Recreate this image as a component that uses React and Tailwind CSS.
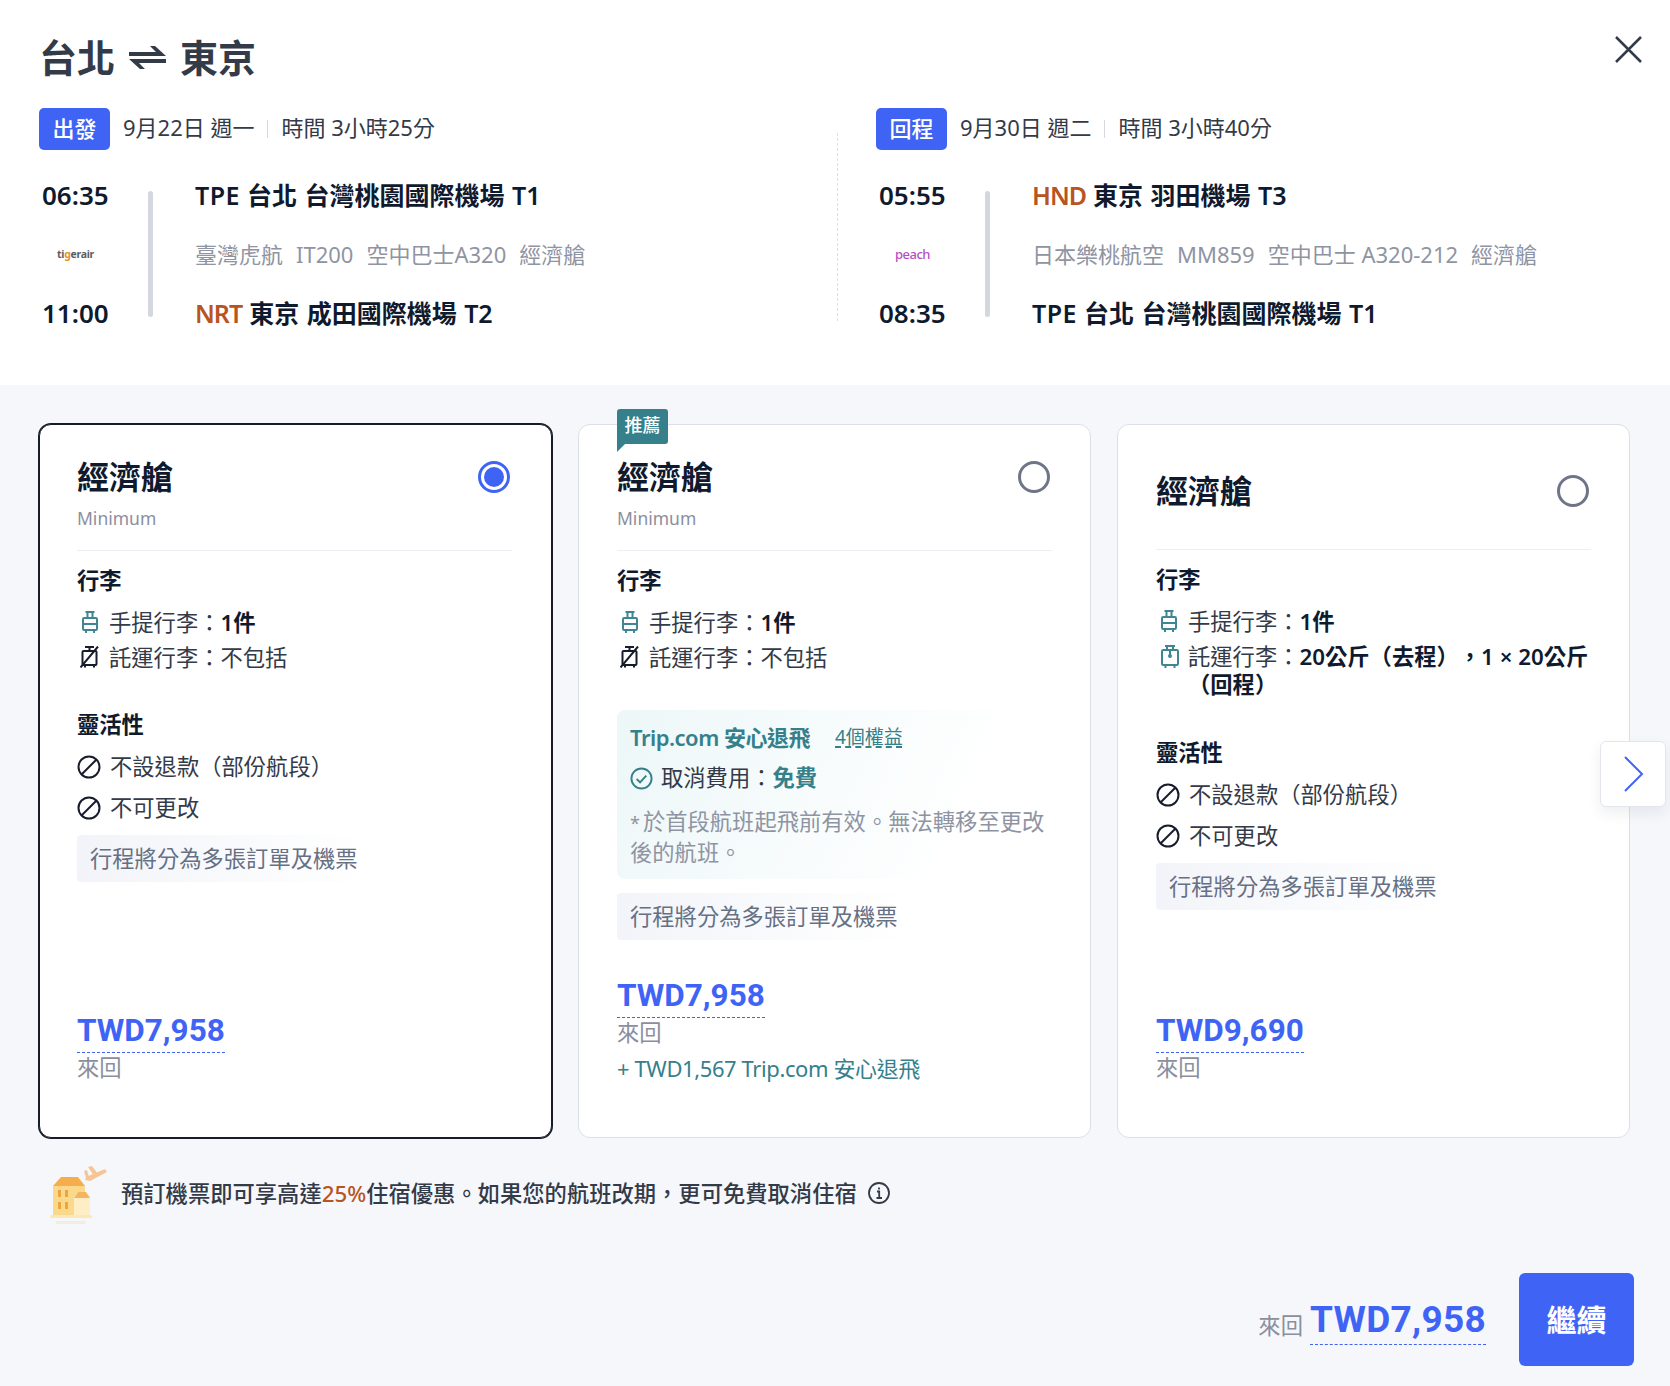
const legs = [
  {
    label: '出發',
    date: '9月22日 週一',
    time: '時間 3小時25分',
    dep: '06:35',
    arr: '11:00',
    from: ['TPE', '台北 台灣桃園國際機場 T1', false],
    to: ['NRT', '東京 成田國際機場 T2', true],
    info: ['臺灣虎航', 'IT200', '空中巴士A320', '經濟艙'],
    logo: 'tigerair',
  },
  {
    label: '回程',
    date: '9月30日 週二',
    time: '時間 3小時40分',
    dep: '05:55',
    arr: '08:35',
    from: ['HND', '東京 羽田機場 T3', true],
    to: ['TPE', '台北 台灣桃園國際機場 T1', false],
    info: ['日本樂桃航空', 'MM859', '空中巴士 A320-212', '經濟艙'],
    logo: 'peach',
  },
];

function Airport({ data }) {
  const [code, name, hot] = data;
  return (
    <div className="h-[59px] flex items-center text-[25px] font-semibold text-[#0f1a2e] whitespace-nowrap">
      <span className={hot ? 'text-[#b8541f] tracking-[-1px]' : 'tracking-[0.5px]'}>{code}</span>
      <span className="ml-[7px] [word-spacing:1px]">{name}</span>
    </div>
  );
}

function Leg({ leg }) {
  return (
    <div>
      <div className="flex items-center h-[42px]">
        <span className="w-[71px] h-[42px] pb-[2px] rounded-[5px] bg-[#3f64f5] text-white text-[22px] font-medium flex items-center justify-center">{leg.label}</span>
        <span className="ml-[13px] pb-[3px] text-[22px] text-[#333a48]">{leg.date}</span>
        <span className="mx-[13px] w-px h-[18px] bg-[#d5d7e0]"></span>
        <span className="pb-[3px] text-[22px] text-[#333a48]">{leg.time}</span>
      </div>
      <div className="flex mt-[16px]">
        <div className="w-[109px] pl-[3px] text-[#0f1a2e]">
          <div className="h-[59px] flex items-center text-[26px] font-semibold">{leg.dep}</div>
          <div className="h-[59px] flex items-center">
            {leg.logo === 'tigerair' ? (
              <span className="w-[67px] text-center text-[10.5px] font-bold text-[#5e5e5e] tracking-[-0.3px]">
                ti<span className="text-[#e8912d]">g</span>erair
              </span>
            ) : (
              <span className="w-[67px] text-center text-[13px] font-medium text-[#b44fc4] tracking-[-0.5px]">peach</span>
            )}
          </div>
          <div className="h-[59px] flex items-center text-[26px] font-semibold">{leg.arr}</div>
        </div>
        <div className="w-[5px] h-[126px] mt-[25px] rounded-full bg-[#d5d7e0]"></div>
        <div className="ml-[42px]">
          <Airport data={leg.from} />
          <div className="h-[59px] flex items-center gap-[13px] text-[22px] text-[#8f94a3] whitespace-nowrap">
            {leg.info.map((item) => (
              <span key={item}>{item}</span>
            ))}
          </div>
          <Airport data={leg.to} />
        </div>
      </div>
    </div>
  );
}

function CarryOnIcon() {
  return (
    <svg viewBox="0 0 16 22" className="w-[16px] h-[22px] ml-[5px] block" fill="none" stroke="#3f8692" strokeWidth="2">
      <path d="M3.500 1h9M5.500 1v6M10.500 1v6" />
      <rect x="1" y="7" width="14" height="12" rx="1.200" />
      <path d="M1 13h14M4 19v3M12 19v3" />
    </svg>
  );
}

function NoBagIcon() {
  return (
    <svg viewBox="0 0 19 22" className="w-[19px] h-[22px] ml-[3px] block" fill="none" stroke="#161c2c" strokeWidth="2">
      <path d="M5 1h9M9.500 1v4" />
      <rect x="2.500" y="5" width="14" height="14" rx="1" />
      <path d="M0.500 21.500 18 0.500M5 19v2.500M14 19v2.500" />
    </svg>
  );
}

function CheckedBagIcon() {
  return (
    <svg viewBox="0 0 18 23" className="w-[18px] h-[23px] ml-[5px] block" fill="none" stroke="#3f8692" strokeWidth="2">
      <path d="M4 1h10M6 1v4M12 1v4" />
      <rect x="1" y="5" width="16" height="15" rx="1.200" />
      <path d="M9 5v5M4.500 20v3M13.500 20v3" />
      <circle cx="9" cy="11" r="1" fill="#3f8692" />
    </svg>
  );
}

function BanIcon() {
  return (
    <svg viewBox="0 0 24 24" className="w-[24px] h-[24px] shrink-0" fill="none" stroke="#161c2c" strokeWidth="2">
      <circle cx="12" cy="12" r="10.500" />
      <path d="M19.500 4.500 4.500 19.500" />
    </svg>
  );
}

function Radio({ on }) {
  return on ? (
    <span className="w-[32px] h-[32px] rounded-full border-[3px] border-[#3f64f5] flex items-center justify-center">
      <span className="w-[20px] h-[20px] rounded-full bg-[#3f64f5]"></span>
    </span>
  ) : (
    <span className="w-[32px] h-[32px] rounded-full border-[3px] border-[#6e7588]"></span>
  );
}

function Price({ value }) {
  return (
    <div className="inline-block [font-family:Roboto,sans-serif] text-[31.5px] leading-[42px] font-bold text-[#3f64f5] border-b border-dashed border-[#3f64f5]">
      {value}
    </div>
  );
}

function Row({ icon, children }) {
  return (
    <div className="flex text-[22.3px] leading-[28px] text-[#333a48]">
      <span className="w-[32px] shrink-0 pt-[2px]">{icon}</span>
      <div className="whitespace-nowrap">{children}</div>
    </div>
  );
}

function Flexibility() {
  return (
    <>
      <div className="text-[22.3px] leading-[30px] font-semibold text-[#0f1a2e]">靈活性</div>
      <div className="mt-[13px] flex items-center gap-[9px] text-[22.3px] leading-[28px] text-[#333a48]">
        <BanIcon />
        不設退款（部份航段）
      </div>
      <div className="mt-[13px] flex items-center gap-[9px] text-[22.3px] leading-[28px] text-[#333a48]">
        <BanIcon />
        不可更改
      </div>
    </>
  );
}

function SplitNote({ top = 'mt-[13px]' }) {
  return (
    <div className={`${top} w-[290px] h-[47px] pl-[13px] flex items-center rounded-[4px] bg-linear-to-r from-[#f2f4f9] to-white text-[22.3px] text-[#667085] whitespace-nowrap`}>
      行程將分為多張訂單及機票
    </div>
  );
}

function Card({ selected, tag, plain, children, price, extra }) {
  return (
    <div className={`relative w-[513px] h-[714px] shrink-0 bg-white rounded-[12px] border flex flex-col ${selected ? 'pl-[37px] pr-[39px] border-[#161c2c] ring-[1px] ring-[#161c2c]' : 'px-[38px] border-[#dcdfe8]'}`}>
      {tag && (
        <div className="absolute left-[38px] -top-[16px]">
          <div className="w-[51px] h-[35px] pb-[2px] rounded-t-[3px] rounded-br-[3px] bg-[#35808b] text-white text-[18px] font-medium flex items-center justify-center">推薦</div>
          <svg viewBox="0 0 8 8" className="w-[8px] h-[8px] block">
            <path d="M0 0h8L0 8z" fill="#35808b" />
          </svg>
        </div>
      )}
      <div className={`${plain ? 'h-[125px] pt-[46px]' : 'h-[126px] pt-[32px]'} shrink-0 border-b border-[#eceef3]`}>
        <div className="flex items-center justify-between pr-[2px]">
          <div className="text-[32px] leading-[40px] font-bold text-[#0f1a2e]">經濟艙</div>
          <Radio on={selected} />
        </div>
        {!plain && <div className="mt-[8px] text-[17.5px] leading-[26px] text-[#8a8f9e]">Minimum</div>}
      </div>
      {children}
      <div className="mt-auto pb-[54px]">
        <Price value={price} />
        <div className="text-[22.3px] leading-[30px] text-[#8a8f9e]">來回</div>
        {extra && <div className="mt-[5px] text-[22px] leading-[30px] tracking-[-0.4px] text-[#35808b]">{extra}</div>}
      </div>
    </div>
  );
}

function Baggage({ checked }) {
  return (
    <>
      <div className="mt-[15px] text-[22.3px] leading-[30px] font-semibold text-[#0f1a2e]">行李</div>
      <div className="mt-[13px]">
        <Row icon={<CarryOnIcon />}>
          手提行李：<b className="font-semibold text-[#0f1a2e]">1件</b>
        </Row>
      </div>
      <div className="mt-[7px]">{checked}</div>
    </>
  );
}

export default function App() {
  return (
    <div className="w-[1670px] h-[1386px] overflow-hidden bg-[#f5f7fb] [font-family:'Noto_Sans','Noto_Sans_CJK_TC',sans-serif]">
      <header className="relative h-[385px] bg-white px-[39px] pt-[36px]">
        <div className="flex items-center h-[42px] text-[38px] font-semibold text-[#333a48]">
          台北
          <svg viewBox="0 0 37 23" className="w-[37px] h-[23px] ml-[14px] mr-[14px]" fill="#333a48">
            <path d="M0 6h27l-6-6h5l11 10H0zM0 13h37v4H10l6 6h-5z" />
          </svg>
          東京
        </div>
        <button className="absolute right-[27px] top-[35px] w-[29px] h-[29px]">
          <svg viewBox="0 0 29 29" className="w-full h-full" fill="none" stroke="#333a48" strokeWidth="2.500">
            <path d="M2 2l25 25M27 2 2 27" />
          </svg>
        </button>
        <div className="flex mt-[30px]">
          <div className="w-[798px] shrink-0">
            <Leg leg={legs[0]} />
          </div>
          <div className="w-0 h-[188px] mt-[25px] border-l border-dashed border-[#dcdfe8]"></div>
          <div className="pl-[38px]">
            <Leg leg={legs[1]} />
          </div>
        </div>
      </header>

      <section className="relative pt-[39px]">
        <div className="flex gap-[26px] pl-[39px]">
          <Card selected price="TWD7,958">
            <Baggage
              checked={
                <Row icon={<NoBagIcon />}>託運行李：不包括</Row>
              }
            />
            <div className="mt-[38px]">
              <Flexibility />
              <SplitNote />
            </div>
          </Card>

          <Card tag price="TWD7,958" extra="+ TWD1,567 Trip.com 安心退飛">
            <Baggage
              checked={
                <Row icon={<NoBagIcon />}>託運行李：不包括</Row>
              }
            />
            <div className="mt-[38px] h-[169px] w-[435px] rounded-[8px] bg-linear-[115deg] from-[#edf7f8] to-white to-[80%] pl-[13px] pt-[13px]">
              <div className="flex items-center h-[28px] text-[#35808b] whitespace-nowrap">
                <span className="text-[22px] font-semibold tracking-[-0.5px]">Trip.com 安心退飛</span>
                <span className="ml-[25px] text-[19px] underline decoration-dashed underline-offset-[3px]">4個權益</span>
              </div>
              <div className="mt-[13px] flex items-center h-[28px] text-[22.3px] text-[#333a48]">
                <svg viewBox="0 0 24 24" className="w-[23px] h-[23px] mr-[8px]" fill="none" stroke="#35808b" strokeWidth="2">
                  <circle cx="12" cy="12" r="10.500" />
                  <path d="m7 12.500 3.500 3.500L17 9" />
                </svg>
                取消費用：<span className="font-semibold text-[#35808b]">免費</span>
              </div>
              <div className="mt-[15px] text-[22.3px] leading-[30px] text-[#8f94a3] whitespace-nowrap">
                <span className="text-[18px] mr-[3px]">*</span>於首段航班起飛前有效。無法轉移至更改
                <br />
                後的航班。
              </div>
            </div>
            <SplitNote top="mt-[14px]" />
          </Card>

          <Card plain price="TWD9,690">
            <Baggage
              checked={
                <Row icon={<CheckedBagIcon />}>
                  託運行李：<b className="font-semibold text-[#0f1a2e] [text-spacing-trim:space-all]">20公斤（去程），1 × 20公斤</b>
                  <br />
                  <b className="font-semibold text-[#0f1a2e]">（回程）</b>
                </Row>
              }
            />
            <div className="mt-[39px]">
              <Flexibility />
              <SplitNote />
            </div>
          </Card>
        </div>

        <button className="absolute left-[1600px] top-[356px] w-[66px] h-[66px] bg-white rounded-[6px] border border-[#e4e6ee] shadow-[0_6px_14px_rgba(30,40,70,0.08)] flex items-center justify-center">
          <svg viewBox="0 0 21 38" className="w-[21px] h-[38px]" fill="none" stroke="#3f64f5" strokeWidth="2">
            <path d="m2 2 17 17L2 36" />
          </svg>
        </button>

        <div className="flex items-center h-[60px] mt-[27px] pl-[50px]">
          <svg viewBox="0 0 58 60" className="w-[58px] h-[60px] shrink-0">
            <path d="M36 12 55 4l2 3-17 9-5-1zM38 2l4-1 6 8-4 2zM34 6l3-1 2 7-3 1z" fill="#f7c594" />
            <rect x="6" y="56" width="30" height="3" rx="1.500" fill="#f3ede0" />
            <rect x="0" y="50" width="42" height="3" rx="1.500" fill="#fde7b4" />
            <path d="M3 21h32v29H3z" fill="#fbd98c" />
            <path d="M3 21l8-9h17l7 9z" fill="#f6ad4e" />
            <path d="M24 50V32l4-5h8l4 5v18z" fill="#fdeec6" />
            <path d="M24 33l4-6h8l4 6z" fill="#f6b45c" />
            <path d="M8 25h3v7H8zM15 25h3v7h-3zM8 37h3v7H8zM15 37h3v7h-3z" fill="#eea53c" />
          </svg>
          <div className="ml-[13px] pb-[3px] text-[22.3px] font-medium text-[#333a48] whitespace-nowrap">
            預訂機票即可享高達<span className="text-[#b8541f]">25%</span>住宿優惠。如果您的航班改期，更可免費取消住宿
          </div>
          <svg viewBox="0 0 24 24" className="w-[24px] h-[24px] ml-[10px] -mt-[4px]" fill="none" stroke="#333a48" strokeWidth="1.800">
            <circle cx="12" cy="12" r="10" />
            <path d="M10 10.500h2.200V17M9.500 17h5.500M12 6.500v2" />
          </svg>
        </div>

        <div className="flex justify-end items-center mt-[48px] pr-[36px]">
          <span className="mt-[12px] mr-[7px] text-[22.3px] text-[#8a8f9e]">來回</span>
          <div className="[font-family:Roboto,sans-serif] text-[37px] leading-[46px] font-bold tracking-[0.3px] text-[#3f64f5] border-b border-dashed border-[#3f64f5] pb-[1px] mt-[2px]">
            TWD7,958
          </div>
          <button className="ml-[33px] w-[115px] h-[93px] rounded-[6px] bg-[#3f64f5] text-white text-[30px] font-semibold">繼續</button>
        </div>
      </section>
    </div>
  );
}
